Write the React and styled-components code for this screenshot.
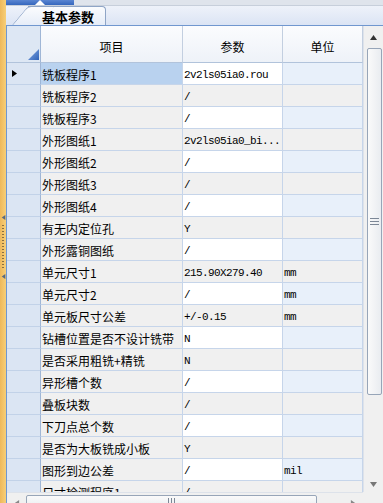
import styled, { createGlobalStyle } from 'styled-components';

const rows = [
  ['铣板程序1', '2v2ls05ia0.rou', ''],
  ['铣板程序2', '/', ''],
  ['铣板程序3', '/', ''],
  ['外形图纸1', '2v2ls05ia0_bi...', ''],
  ['外形图纸2', '/', ''],
  ['外形图纸3', '/', ''],
  ['外形图纸4', '/', ''],
  ['有无内定位孔', 'Y', ''],
  ['外形露铜图纸', '/', ''],
  ['单元尺寸1', '215.90X279.40', 'mm'],
  ['单元尺寸2', '/', 'mm'],
  ['单元板尺寸公差', '+/-0.15', 'mm'],
  ['钻槽位置是否不设计铣带', 'N', ''],
  ['是否采用粗铣+精铣', 'N', ''],
  ['异形槽个数', '/', ''],
  ['叠板块数', '/', ''],
  ['下刀点总个数', '/', ''],
  ['是否为大板铣成小板', 'Y', ''],
  ['图形到边公差', '/', 'mil'],
  ['尺寸检测程序1', '/', ''],
];

function Arrow({ dir, color = '#000', size = 7 }) {
  const pts = {
    up: '0,6 3.5,1 7,6',
    down: '0,1 3.5,6 7,1',
    left: '6,0 1,3.5 6,7',
    right: '1,0 6,3.5 1,7',
  };
  return (
    <svg width={size} height={size} viewBox='0 0 7 7'>
      <polygon points={pts[dir]} fill={color} />
    </svg>
  );
}

function App() {
  return (
    <Frame>
      <GlobalStyle />
      <LeftStrip>
        <Arrow dir='left' color='#5a6a80' size={5} />
        <Dots />
        <Arrow dir='left' color='#5a6a80' size={5} />
      </LeftStrip>

      <Main>
        <TopBar>
          <TopBand>
            <svg width='10' height='5' viewBox='0 0 10 5'>
              <polygon points='0,5 5,0 10,5' fill='#fff' />
            </svg>
          </TopBand>
        </TopBar>

        <TabStrip>
          <Tab>基本参数</Tab>
        </TabStrip>

        <Body>
          <Table>
            <HeaderRow>
              <CornerCell>
                <svg width='11' height='11' viewBox='0 0 11 11'>
                  <defs>
                    <linearGradient id='cg' x1='0' y1='0' x2='1' y2='1'>
                      <stop offset='0' stopColor='#86abe4' />
                      <stop offset='1' stopColor='#2f62b8' />
                    </linearGradient>
                  </defs>
                  <polygon points='11,0 11,11 0,11' fill='url(#cg)' />
                </svg>
              </CornerCell>
              <HeadCell>项目</HeadCell>
              <HeadCell>参数</HeadCell>
              <HeadCell>单位</HeadCell>
            </HeaderRow>

            {rows.map(([label, value, unit], i) => (
              <Row key={i}>
                <RowHead>{i === 0 && <Arrow dir='right' size={7} />}</RowHead>
                <LabelCell $selected={i === 0}>{label}</LabelCell>
                <ValueCell $odd={i % 2 === 0}>{value}</ValueCell>
                <UnitCell $odd={i % 2 === 0}>{unit}</UnitCell>
              </Row>
            ))}
          </Table>

          <VScroll>
            <ScrollButton $h={22}>
              <Arrow dir='up' color='#333' />
            </ScrollButton>
            <VThumb>
              <Grip />
            </VThumb>
            <ScrollButton $h={16} style={{ marginTop: 'auto' }}>
              <Arrow dir='down' color='#777' />
            </ScrollButton>
          </VScroll>

          <HScroll>
            <HButton>
              <Arrow dir='left' color='#888' size={6} />
            </HButton>
            <HThumb>
              <HGrip />
            </HThumb>
            <HButton>
              <Arrow dir='right' color='#888' size={6} />
            </HButton>
          </HScroll>
          <ScrollCorner />
        </Body>
      </Main>
    </Frame>
  );
}

export default App;

const GlobalStyle = createGlobalStyle`
  body {
    margin: 0;
    background: #ffffff;
  }
`;

const Frame = styled.div`
  display: flex;
  width: 383px;
  height: 503px;
  overflow: hidden;
  font-family: 'Noto Sans CJK SC', 'Noto Sans', sans-serif;
  font-size: 12px;
  color: #000;
`;

const LeftStrip = styled.div`
  display: flex;
  flex-direction: column;
  align-items: center;
  gap: 5px;
  width: 6px;
  flex-shrink: 0;
  padding-top: 215px;
  box-sizing: border-box;
  background: linear-gradient(to right, #eeb85a, #f7cf78);
`;

const Dots = styled.div`
  width: 2px;
  height: 44px;
  background: repeating-linear-gradient(to bottom, #8a7040 0 1px, transparent 1px 3px);
`;

const Main = styled.div`
  display: flex;
  flex-direction: column;
  flex: 1;
`;

const TopBar = styled.div`
  display: flex;
  height: 5px;
  background: #dfe4ec;
`;

const TopBand = styled.div`
  display: flex;
  align-items: flex-end;
  justify-content: center;
  width: 68px;
  background: linear-gradient(to bottom, #5a86d2, #3566bd);
`;

const TabStrip = styled.div`
  display: flex;
  align-items: flex-end;
  height: 24px;
  box-sizing: border-box;
  padding-left: 22px;
  border-top: 1px solid #c7cfdb;
  border-bottom: 1px solid #7097cf;
  background: linear-gradient(to bottom, #eef2fa, #dbe4f4);
`;

const Tab = styled.div`
  position: relative;
  isolation: isolate;
  height: 18px;
  padding: 0 11px 0 14px;
  border: 1px solid #8fa5c6;
  border-bottom: none;
  border-left: none;
  border-radius: 0 4px 0 0;
  background: linear-gradient(to bottom, #fbfcfe, #e6edf8);
  font-size: 13px;
  font-weight: 700;
  line-height: 20px;

  &::before {
    content: '';
    position: absolute;
    top: -1px;
    bottom: 0;
    left: -16px;
    width: 26px;
    border-left: 1px solid #8fa5c6;
    border-top: 1px solid #8fa5c6;
    border-top-left-radius: 4px;
    background: linear-gradient(to bottom, #fbfcfe, #e6edf8);
    transform: skewX(-40deg);
    transform-origin: bottom left;
    z-index: -1;
  }
`;

const Body = styled.div`
  display: grid;
  grid-template-columns: 356px 20px;
  grid-template-rows: 466px 17px;
  border-left: 1px solid #7097cf;
`;

const Table = styled.div`
  display: flex;
  flex-direction: column;
  overflow: hidden;
  background: #f0f0f0;
`;

const Row = styled.div`
  display: grid;
  grid-template-columns: 34px 142px 100px 80px;
  height: 22px;
  flex-shrink: 0;
`;

const HeaderRow = styled(Row)`
  height: 37px;
`;

const Cell = styled.div`
  display: flex;
  align-items: center;
  box-sizing: border-box;
  padding-top: 2px;
  border-right: 1px solid #c6d5ea;
  border-bottom: 1px solid #c6d5ea;
  white-space: nowrap;
  overflow: hidden;
`;

const HeadCell = styled(Cell)`
  justify-content: center;
  padding-top: 5px;
  border-right-color: #c3cfe0;
  border-bottom-color: #b1c3db;
  background: linear-gradient(to bottom, #fbfcfe, #eef2f8);
`;

const CornerCell = styled(Cell)`
  align-items: flex-end;
  justify-content: flex-end;
  padding: 0 1px 2px 0;
  border-right-color: #9fb6d6;
  border-bottom-color: #b1c3db;
  background: #dde7f4;
`;

const RowHead = styled(Cell)`
  padding-left: 4px;
  padding-top: 0;
  border-right-color: #9fb6d6;
  border-bottom-color: #c2d2e8;
  background: #dbe5f3;
`;

const LabelCell = styled(Cell)`
  padding-left: 1px;
  background: ${(p) => (p.$selected ? '#b9d2ef' : '#f0f0f0')};
`;

const ValueCell = styled(Cell)`
  padding-left: 1px;
  font-family: 'Liberation Mono', monospace;
  font-size: 11px;
  letter-spacing: -0.6px;
  background: ${(p) => (p.$odd ? '#ffffff' : '#f0f0f0')};
`;

const UnitCell = styled(ValueCell)`
  background: ${(p) => (p.$odd ? '#e8f0fa' : '#f0f0f0')};
`;

const VScroll = styled.div`
  display: flex;
  flex-direction: column;
  align-items: center;
  background: #f0f0f0;
  border-left: 1px solid #dde2ea;
`;

const ScrollButton = styled.div`
  display: flex;
  align-items: center;
  justify-content: center;
  height: ${(p) => p.$h}px;
  width: 100%;
  flex-shrink: 0;
`;

const VThumb = styled.div`
  display: flex;
  align-items: center;
  justify-content: center;
  width: 15px;
  height: 347px;
  margin-left: 1px;
  box-sizing: border-box;
  border: 1px solid #97a5b8;
  border-radius: 2px;
  background: linear-gradient(to right, #fafafa, #e9ecf0);
`;

const Grip = styled.div`
  width: 9px;
  height: 7px;
  background: repeating-linear-gradient(to bottom, #7c8796 0 1px, transparent 1px 3px);
`;

const HScroll = styled.div`
  display: flex;
  align-items: flex-start;
  padding-top: 2px;
  background: #f0f0f0;
  border-top: 1px solid #dde2ea;
`;

const HButton = styled.div`
  display: flex;
  align-items: center;
  justify-content: center;
  width: 20px;
  height: 15px;
`;

const HThumb = styled.div`
  display: flex;
  align-items: center;
  justify-content: center;
  width: 301px;
  height: 14px;
  margin: 0 27px 0 0;
  box-sizing: border-box;
  border: 1px solid #97a5b8;
  border-radius: 2px;
  background: linear-gradient(to bottom, #fafafa, #e9ecf0);
`;

const HGrip = styled.div`
  width: 7px;
  height: 8px;
  background: repeating-linear-gradient(to right, #7c8796 0 1px, transparent 1px 3px);
`;

const ScrollCorner = styled.div`
  background: #f0f0f0;
`;
